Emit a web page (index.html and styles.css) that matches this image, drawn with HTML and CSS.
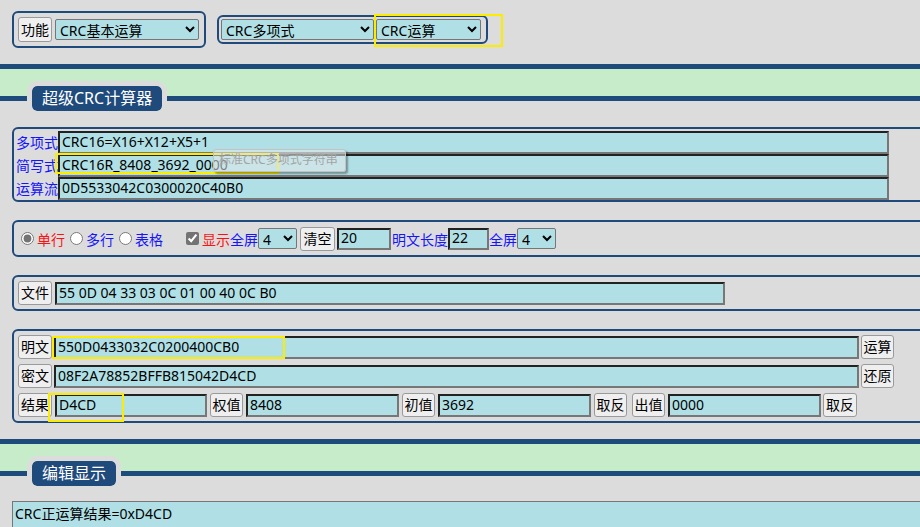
FILE: index.html
```html
<!DOCTYPE html>
<html lang="zh-CN">
<head>
<meta charset="utf-8">
<title>超级CRC计算器</title>
<link rel="stylesheet" href="styles.css">
</head>
<body>
<div class="top">
  <div class="box box-func">
    <button class="btn btn-tall">功能</button>
    <select class="sel sel-func"><option>CRC基本运算</option></select>
  </div>
  <div class="box box-mode">
    <select class="sel sel-poly"><option>CRC多项式</option></select>
    <select class="sel sel-op"><option>CRC运算</option></select>
    <span class="hl hl-op"></span>
  </div>
</div>

<div class="band"><div class="legend">超级CRC计算器</div></div>

<div class="sec sec-poly">
  <div class="frow"><span class="lbl">多项式</span><input class="inp inp-poly" value="CRC16=X16+X12+X5+1"></div>
  <div class="frow"><span class="lbl">简写式</span><input class="inp inp-poly" value="CRC16R_8408_3692_0000"><span class="hl hl-short"></span><span class="tip">标准CRC多项式字符串</span></div>
  <div class="frow"><span class="lbl">运算流</span><input class="inp inp-poly" value="0D5533042C0300020C40B0"></div>
</div>

<div class="sec sec-opts">
  <input type="radio" name="mode" class="rad" checked><span class="red opt">单行</span>
  <input type="radio" name="mode" class="rad"><span class="blue opt">多行</span>
  <input type="radio" name="mode" class="rad"><span class="blue opt opt-last">表格</span>
  <input type="checkbox" class="chk" checked><span class="red">显示</span><span class="blue">全屏</span>
  <select class="sel sel-n"><option>4</option></select>
  <button class="btn btn-clear">清空</button>
  <input class="inp inp-n1" value="20">
  <span class="blue">明文长度</span>
  <input class="inp inp-n2" value="22">
  <span class="blue">全屏</span>
  <select class="sel sel-n"><option>4</option></select>
</div>

<div class="sec sec-file">
  <button class="btn btn-34">文件</button>
  <input class="inp inp-file" value="55 0D 04 33 03 0C 01 00 40 0C B0">
</div>

<div class="sec sec-text">
  <div class="trow trow-wide">
    <button class="btn btn-34">明文</button>
    <input class="inp inp-long" value="550D0433032C0200400CB0">
    <button class="btn btn-33">运算</button>
    <span class="hl hl-plain"></span>
  </div>
  <div class="trow trow-wide">
    <button class="btn btn-34">密文</button>
    <input class="inp inp-long" value="08F2A78852BFFB815042D4CD">
    <button class="btn btn-33">还原</button>
  </div>
  <div class="trow">
    <button class="btn btn-34">结果</button>
    <input class="inp inp-res" value="D4CD">
    <button class="btn btn-33">权值</button>
    <input class="inp inp-mid" value="8408">
    <button class="btn btn-33">初值</button>
    <input class="inp inp-mid" value="3692">
    <button class="btn btn-33">取反</button>
    <button class="btn btn-33 btn-gap">出值</button>
    <input class="inp inp-mid" value="0000">
    <button class="btn btn-34 btn-end">取反</button>
    <span class="hl hl-res"></span>
  </div>
</div>

<div class="band"><div class="legend">编辑显示</div></div>

<textarea class="out">CRC正运算结果=0xD4CD</textarea>
</body>
</html>
```
FILE: styles.css
```css
html, body {
  margin: 0;
  padding: 0;
  overflow: hidden;
  background: #dcdcdc;
}
body {
  font-family: "Noto Sans", "Noto Sans CJK SC", sans-serif;
  font-size: 14px;
  color: #000;
}

.top {
  display: flex;
  align-items: center;
  gap: 11px;
  margin: 11px 0 0 12px;
  height: 37px;
}
.box {
  position: relative;
  display: flex;
  align-items: center;
  box-sizing: border-box;
  border: 2px solid #1f4a7c;
  border-radius: 6px;
}
.box-func { width: 194px; height: 37px; padding: 0 4px; gap: 3px; }
.box-mode { width: 271px; height: 29px; padding: 0 2px; gap: 2px; }

.btn {
  font: inherit;
  height: 24px;
  padding: 0 2px;
  margin: 0;
  border: 1px solid #9a9a9a;
  border-radius: 3px;
  background: #efefef;
  color: #000;
  line-height: 20px;
  box-sizing: border-box;
  white-space: nowrap;
}
.btn-tall { height: 25px; width: 34px; }
.btn-clear { width: 35px; }
.btn-34 { width: 34px; padding: 0; }
.btn-33 { width: 33px; padding: 0; }

.sel {
  font: inherit;
  height: 21px;
  margin: 0;
  box-sizing: border-box;
  border: 1px solid #767676;
  border-radius: 2px;
  background-color: #b0e0e6;
  color: #000;
}
.sel-func { width: 144px; }
.sel-poly { width: 153px; }
.sel-op { width: 105px; }
.sel-n { width: 39px; }

.inp {
  font: inherit;
  height: 23px;
  margin: 0;
  box-sizing: border-box;
  border-style: solid;
  border-width: 2px;
  border-color: #222 #777 #777 #222;
  background: #b0e0e6;
  color: #000;
  padding: 0 2px 2px;
}

.hl {
  position: absolute;
  box-sizing: border-box;
  border: 2px solid #fbec00;
  pointer-events: none;
}
.hl-op { left: 155px; top: -3px; width: 129px; height: 33px; }

.band {
  position: relative;
  margin-top: 16px;
  height: 27px;
  border-top: 5px solid #1f4a7c;
  border-bottom: 5px solid #1f4a7c;
  background: #c7ecca;
}
.legend {
  position: absolute;
  left: 27px;
  top: 12px;
  height: 25px;
  padding: 0 10px;
  border: 5px solid #dcdcdc;
  border-radius: 10px;
  background: #1f4a7c;
  background-clip: padding-box;
  color: #fff;
  font-size: 16px;
  line-height: 25px;
}

.sec {
  width: 1000px;
  margin-left: 12px;
  box-sizing: border-box;
  border: 2px solid #1f4a7c;
  border-radius: 6px;
}

.sec-poly { margin-top: 26px; height: 75px; padding: 2px 0 0 2px; }
.frow { position: relative; display: flex; height: 23px; }
.lbl { width: 42px; color: #1414ff; line-height: 23px; white-space: nowrap; }
.inp-poly { width: 831px; }
.hl-short { left: 39px; top: -1px; width: 224px; height: 21px; }
.tip {
  position: absolute;
  left: 197px;
  top: -5px;
  width: 133px;
  height: 23px;
  box-sizing: border-box;
  border: 1px solid #c2c2c2;
  border-radius: 3px;
  background: rgba(225, 232, 233, 0.55);
  box-shadow: 2px 2px 2px rgba(0, 0, 0, 0.35);
  color: #a4a4a4;
  font-size: 12px;
  line-height: 20px;
  padding-left: 5px;
  white-space: nowrap;
}

.sec-opts {
  margin-top: 18px;
  height: 37px;
  display: flex;
  align-items: center;
  padding-left: 7px;
}
.rad, .chk {
  width: 13px;
  height: 13px;
  margin: 0 3px 0 0;
  accent-color: #737373;
}
.red { color: #ff1010; }
.blue { color: #1414ff; }
.opt { margin-right: 5px; }
.opt-last { margin-right: 23px; }
.sec-opts .btn { margin-left: 3px; }
.inp-n1 { width: 54px; margin-left: 2px; margin-right: 1px; height: 22px; }
.inp-n2 { width: 41px; height: 22px; }

.sec-file {
  margin-top: 18px;
  height: 36px;
  display: flex;
  align-items: center;
  gap: 3px;
  padding-left: 4px;
}
.inp-file { width: 670px; }

.sec-text {
  margin-top: 18px;
  height: 94px;
  padding: 4px 0 0 4px;
  display: flex;
  flex-direction: column;
  gap: 5px;
}
.trow {
  position: relative;
  display: flex;
  align-items: center;
  height: 24px;
  gap: 3px;
}
.trow-wide { gap: 2px; }
.inp-long { width: 805px; }
.inp-res { width: 152px; }
.inp-mid { width: 153px; }
.btn-gap { margin-left: 2px; }
.btn-end { margin-left: -1px; }
.hl-plain { left: 34px; top: 1px; width: 233px; height: 23px; }
.hl-res { left: 30px; top: 0; width: 76px; height: 29px; }

.out {
  display: block;
  margin: 25px 0 0 12px;
  width: 1000px;
  height: 60px;
  box-sizing: border-box;
  border: 1px solid #777;
  background: #b0e0e6;
  font: inherit;
  color: #000;
  padding: 1px 2px;
  resize: none;
}
```
